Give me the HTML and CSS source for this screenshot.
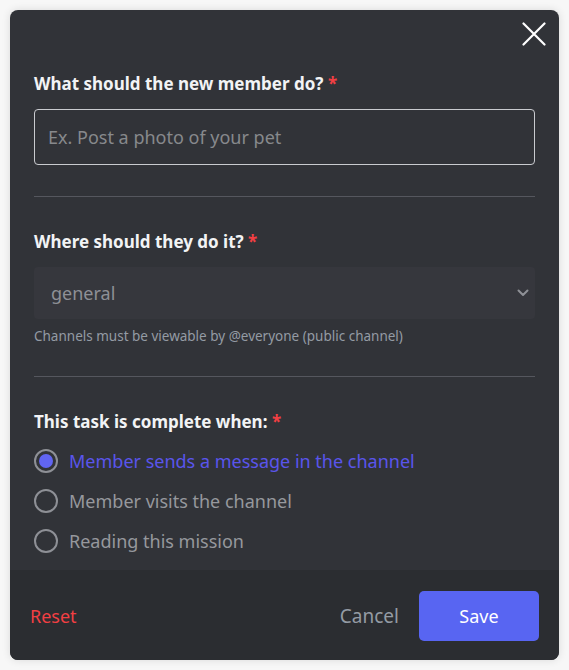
FILE: index.html
```html
<!DOCTYPE html>
<html lang="en">
<head>
<meta charset="utf-8">
<title>Task</title>
<link rel="stylesheet" href="styles.css">
</head>
<body>
<div class="page">
  <div class="modal">
    <div class="modal-top">
      <button class="close" aria-label="Close">
        <svg width="24" height="24" viewBox="0 0 24 24"><path d="M1.5 1.5L22.5 22.5M22.5 1.5L1.5 22.5" stroke="#ffffff" stroke-width="2.2" stroke-linecap="round" fill="none"/></svg>
      </button>
    </div>
    <div class="content">
      <div class="field">
        <label class="label">What should the new member do? <span class="req">*</span></label>
        <div class="input">Ex. Post a photo of your pet</div>
      </div>
      <div class="divider"></div>
      <div class="field">
        <label class="label">Where should they do it? <span class="req">*</span></label>
        <div class="select">
          <span>general</span>
          <svg width="12" height="8" viewBox="0 0 12 8"><path d="M1.5 1.5L6 6L10.5 1.5" stroke="#8e9096" stroke-width="2" fill="none" stroke-linecap="round" stroke-linejoin="round"/></svg>
        </div>
        <div class="hint">Channels must be viewable by @everyone (public channel)</div>
      </div>
      <div class="divider second"></div>
      <div class="field">
        <label class="label">This task is complete when: <span class="req">*</span></label>
        <div class="radios">
          <div class="radio selected"><span class="dot"></span><span>Member sends a message in the channel</span></div>
          <div class="radio"><span class="dot"></span><span>Member visits the channel</span></div>
          <div class="radio"><span class="dot"></span><span>Reading this mission</span></div>
        </div>
      </div>
    </div>
    <div class="footer">
      <button class="reset">Reset</button>
      <div class="actions">
        <button class="cancel">Cancel</button>
        <button class="save">Save</button>
      </div>
    </div>
  </div>
</div>
</body>
</html>
```

FILE: styles.css
```css
* { box-sizing: border-box; }
html, body { margin: 0; padding: 0; }
body {
  background: #f7f7f7;
  font-family: "Noto Sans", "Open Sans", sans-serif;
}
.page { padding: 10px; }
.modal {
  width: 549px;
  height: 650px;
  background: #313338;
  border-radius: 8px;
  box-shadow: 0 0 8px rgba(0,0,0,0.12);
  display: flex;
  flex-direction: column;
  overflow: hidden;
}
.modal-top {
  display: flex;
  justify-content: flex-end;
  padding: 12px 13px 0 0;
}
.close {
  width: 24px; height: 24px;
  padding: 0; border: 0; background: none;
  display: block;
}
.close svg { display: block; }
.content {
  flex: 1;
  padding: 28px 24px 0 24px;
}
.field { display: flex; flex-direction: column; }
.label {
  font-size: 17px;
  line-height: 20px;
  font-weight: 700;
  color: #f2f3f5;
}
.req { color: #f23f43; }
.input {
  margin-top: 15px;
  height: 56px;
  border: 1px solid #c9cbcf;
  border-radius: 4px;
  padding: 0 13px;
  display: flex;
  align-items: center;
  font-size: 18px;
  color: #87898c;
}
.divider {
  height: 1px;
  background: #55575e;
  margin: 31px 0 35px;
}
.divider.second { margin-top: 31px; }
.select {
  margin-top: 15px;
  height: 52px;
  background: #36373d;
  border-radius: 4px;
  padding: 0 6px 0 17px;
  display: flex;
  align-items: center;
  justify-content: space-between;
  font-size: 18px;
  color: #8e9096;
}
.select svg { display: block; }
.hint {
  margin-top: 8px;
  font-size: 13.5px;
  line-height: 18px;
  color: #949ba4;
}
.radios {
  margin-top: 17px;
  display: flex;
  flex-direction: column;
  gap: 16px;
}
.radio {
  display: flex;
  align-items: center;
  gap: 11px;
  height: 24px;
  font-size: 18px;
  color: #96989d;
}
.dot {
  width: 24px; height: 24px;
  border: 2px solid #8e9096;
  border-radius: 50%;
  flex: none;
  display: flex;
  align-items: center;
  justify-content: center;
}
.radio.selected { color: #5a55ec; }
.radio.selected .dot::after {
  content: "";
  width: 14px; height: 14px;
  border-radius: 50%;
  background: #6165f2;
}
.footer {
  height: 90px;
  background: #2b2d31;
  display: flex;
  align-items: center;
  justify-content: space-between;
  padding: 2px 20px 0;
}
button { font-family: inherit; cursor: pointer; }
.reset {
  background: none; border: 0; padding: 0;
  font-size: 18px; color: #f23f43;
}
.actions { display: flex; align-items: center; gap: 20px; }
.cancel {
  background: none; border: 0; padding: 0;
  font-size: 19px; color: #949ba4;
}
.save {
  width: 120px; height: 50px;
  border: 0; border-radius: 5px;
  background: #5865f2;
  color: #ffffff;
  font-size: 18px;
}
```
